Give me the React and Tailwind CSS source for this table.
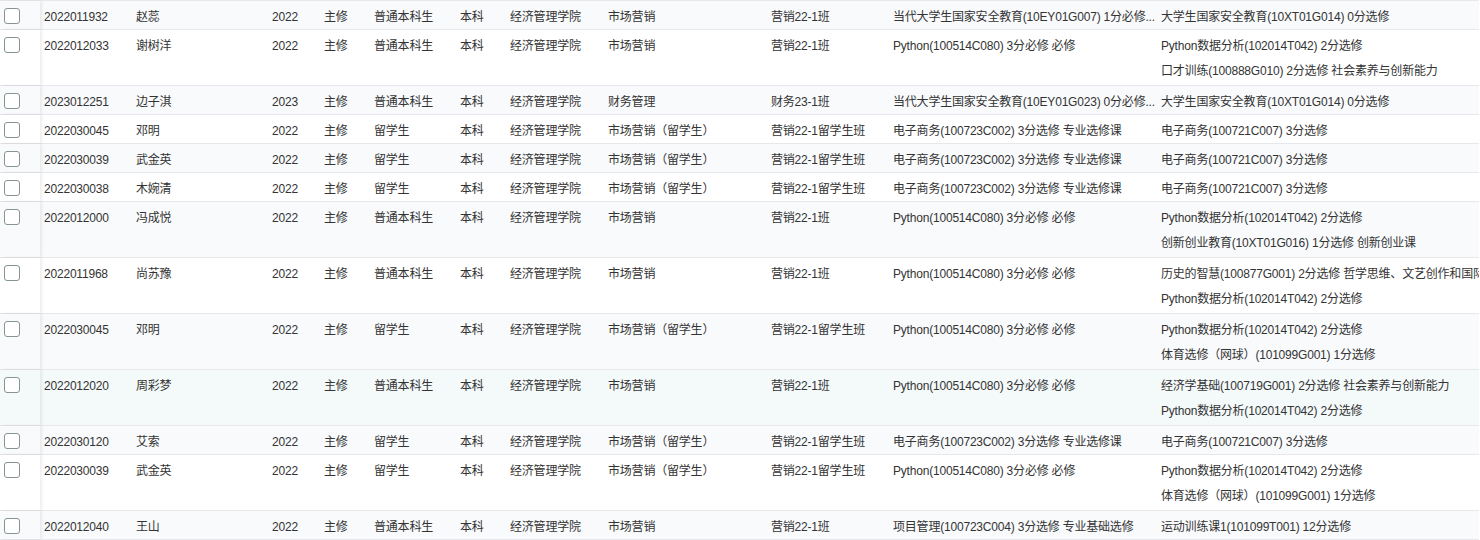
const ZS = "普通本科生";
const LX = "留学生";

const rows = [
  { id: "2022011932", name: "赵蕊", year: "2022", kind: ZS, major: "市场营销", cls: "营销22-1班", c1: "当代大学生国家安全教育(10EY01G007) 1分必修...", c2: ["大学生国家安全教育(10XT01G014) 0分选修"] },
  { id: "2022012033", name: "谢树洋", year: "2022", kind: ZS, major: "市场营销", cls: "营销22-1班", c1: "Python(100514C080) 3分必修 必修", c2: ["Python数据分析(102014T042) 2分选修", "口才训练(100888G010) 2分选修 社会素养与创新能力"] },
  { id: "2023012251", name: "边子淇", year: "2023", kind: ZS, major: "财务管理", cls: "财务23-1班", c1: "当代大学生国家安全教育(10EY01G023) 0分必修...", c2: ["大学生国家安全教育(10XT01G014) 0分选修"] },
  { id: "2022030045", name: "邓明", year: "2022", kind: LX, major: "市场营销（留学生）", cls: "营销22-1留学生班", c1: "电子商务(100723C002) 3分选修 专业选修课", c2: ["电子商务(100721C007) 3分选修"] },
  { id: "2022030039", name: "武金英", year: "2022", kind: LX, major: "市场营销（留学生）", cls: "营销22-1留学生班", c1: "电子商务(100723C002) 3分选修 专业选修课", c2: ["电子商务(100721C007) 3分选修"] },
  { id: "2022030038", name: "木婉清", year: "2022", kind: LX, major: "市场营销（留学生）", cls: "营销22-1留学生班", c1: "电子商务(100723C002) 3分选修 专业选修课", c2: ["电子商务(100721C007) 3分选修"] },
  { id: "2022012000", name: "冯成悦", year: "2022", kind: ZS, major: "市场营销", cls: "营销22-1班", c1: "Python(100514C080) 3分必修 必修", c2: ["Python数据分析(102014T042) 2分选修", "创新创业教育(10XT01G016) 1分选修 创新创业课"] },
  { id: "2022011968", name: "尚苏豫", year: "2022", kind: ZS, major: "市场营销", cls: "营销22-1班", c1: "Python(100514C080) 3分必修 必修", c2: ["历史的智慧(100877G001) 2分选修 哲学思维、文艺创作和国际视野", "Python数据分析(102014T042) 2分选修"] },
  { id: "2022030045", name: "邓明", year: "2022", kind: LX, major: "市场营销（留学生）", cls: "营销22-1留学生班", c1: "Python(100514C080) 3分必修 必修", c2: ["Python数据分析(102014T042) 2分选修", "体育选修（网球）(101099G001) 1分选修"] },
  { id: "2022012020", name: "周彩梦", year: "2022", kind: ZS, major: "市场营销", cls: "营销22-1班", c1: "Python(100514C080) 3分必修 必修", c2: ["经济学基础(100719G001) 2分选修 社会素养与创新能力", "Python数据分析(102014T042) 2分选修"], hover: true },
  { id: "2022030120", name: "艾索", year: "2022", kind: LX, major: "市场营销（留学生）", cls: "营销22-1留学生班", c1: "电子商务(100723C002) 3分选修 专业选修课", c2: ["电子商务(100721C007) 3分选修"] },
  { id: "2022030039", name: "武金英", year: "2022", kind: LX, major: "市场营销（留学生）", cls: "营销22-1留学生班", c1: "Python(100514C080) 3分必修 必修", c2: ["Python数据分析(102014T042) 2分选修", "体育选修（网球）(101099G001) 1分选修"] },
  { id: "2022012040", name: "王山", year: "2022", kind: ZS, major: "市场营销", cls: "营销22-1班", c1: "项目管理(100723C004) 3分选修 专业基础选修", c2: ["运动训练课1(101099T001) 12分选修"] },
];

function Cell({ w, children, className = "" }) {
  return (
    <div className={`shrink-0 overflow-hidden pt-[4px] pl-[4px] leading-[25px] whitespace-nowrap ${w} ${className}`}>
      {children}
    </div>
  );
}

function Row({ r, i }) {
  const bg = r.hover ? "bg-[#f4f9fa]" : i % 2 === 0 ? "bg-[#f9fafc]" : "bg-white";
  const h = r.c2.length > 1 ? "h-[56px]" : "h-[29px]";
  return (
    <div className={`flex border-b border-[#e6e8eb] ${h} ${bg}`}>
      <div className={`relative z-10 w-[40px] shrink-0 pl-[4px] pt-[7px] shadow-[2px_0_3px_rgba(0,0,0,0.07)] ${bg}`}>
        <div className="h-[16px] w-[16px] rounded-[3px] border border-[#869494] bg-white" />
      </div>
      <Cell w="w-[92px]">{r.id}</Cell>
      <Cell w="w-[136px]">{r.name}</Cell>
      <Cell w="w-[52px]">{r.year}</Cell>
      <Cell w="w-[50px]">主修</Cell>
      <Cell w="w-[86px]">{r.kind}</Cell>
      <Cell w="w-[50px]">本科</Cell>
      <Cell w="w-[98px]">经济管理学院</Cell>
      <Cell w="w-[163px]">{r.major}</Cell>
      <Cell w="w-[122px]">{r.cls}</Cell>
      <Cell w="w-[268px]">{r.c1}</Cell>
      <div className="min-w-0 flex-1 overflow-hidden pt-[4px] pl-[4px] leading-[25px] whitespace-nowrap">
        {r.c2.map((c, k) => (
          <div key={k} className="h-[25px]">{c}</div>
        ))}
      </div>
    </div>
  );
}

export default function App() {
  return (
    <div className="h-[540px] w-[1480px] overflow-hidden bg-white">
      <div className="w-[1479px] border-t border-[#e6e8eb] font-['Liberation_Sans','Noto_Sans_CJK_SC',sans-serif] text-[12px] tracking-[-0.2px] text-[#333]">
        {rows.map((r, i) => (
          <Row key={i} r={r} i={i} />
        ))}
      </div>
    </div>
  );
}
